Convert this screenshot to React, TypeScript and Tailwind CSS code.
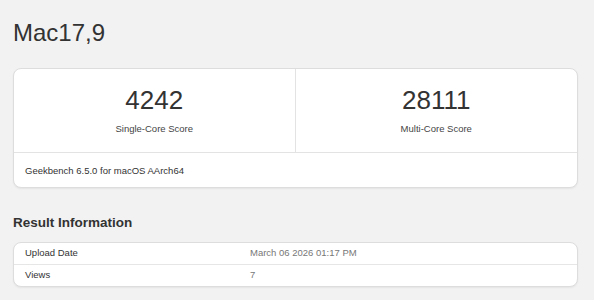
import React from 'react';

const font = { fontFamily: '"Liberation Sans", Arial, sans-serif' };

export default function App() {
  return (
    <div className="min-h-[300px] w-full bg-[#f2f2f2] px-[13px] pb-4 text-[#333]" style={font}>
      <h1 className="pt-[21px] text-[24px] leading-none font-normal text-[#333]">Mac17,9</h1>

      {/* Score card */}
      <div className="mt-[23px] w-[565px] rounded-[8px] border border-[#dddddd] bg-white shadow-[0_1px_2px_rgba(0,0,0,0.06)]">
        <div className="grid grid-cols-2 border-b border-[#e3e3e3]">
          <div className="flex h-[83px] flex-col items-center border-r border-[#e3e3e3] pt-[18px]">
            <div className="text-[26px] leading-none text-[#333]">4242</div>
            <div className="mt-[11px] text-[9.5px] leading-none text-[#444]">Single-Core Score</div>
          </div>
          <div className="flex h-[83px] flex-col items-center pt-[18px]">
            <div className="text-[26px] leading-none text-[#333]">28111</div>
            <div className="mt-[11px] text-[9.5px] leading-none text-[#444]">Multi-Core Score</div>
          </div>
        </div>
        <div className="flex h-[34px] items-center px-[11px] pt-[1px] text-[9.5px] leading-none text-[#333]">
          Geekbench 6.5.0 for macOS AArch64
        </div>
      </div>

      <h2 className="mt-[28px] text-[13.5px] leading-none font-bold text-[#333]">Result Information</h2>

      {/* Info table */}
      <div className="mt-[12px] w-[565px] rounded-[8px] border border-[#dddddd] bg-white shadow-[0_1px_2px_rgba(0,0,0,0.06)] text-[9.5px] leading-none">
        <div className="flex h-[22px] items-center border-b border-[#e6e6e6]">
          <div className="w-[236px] pl-[11px] text-[#333]">Upload Date</div>
          <div className="text-[#777]">March 06 2026 01:17 PM</div>
        </div>
        <div className="flex h-[21px] items-center">
          <div className="w-[236px] pl-[11px] text-[#333]">Views</div>
          <div className="text-[#777]">7</div>
        </div>
      </div>
    </div>
  );
}
